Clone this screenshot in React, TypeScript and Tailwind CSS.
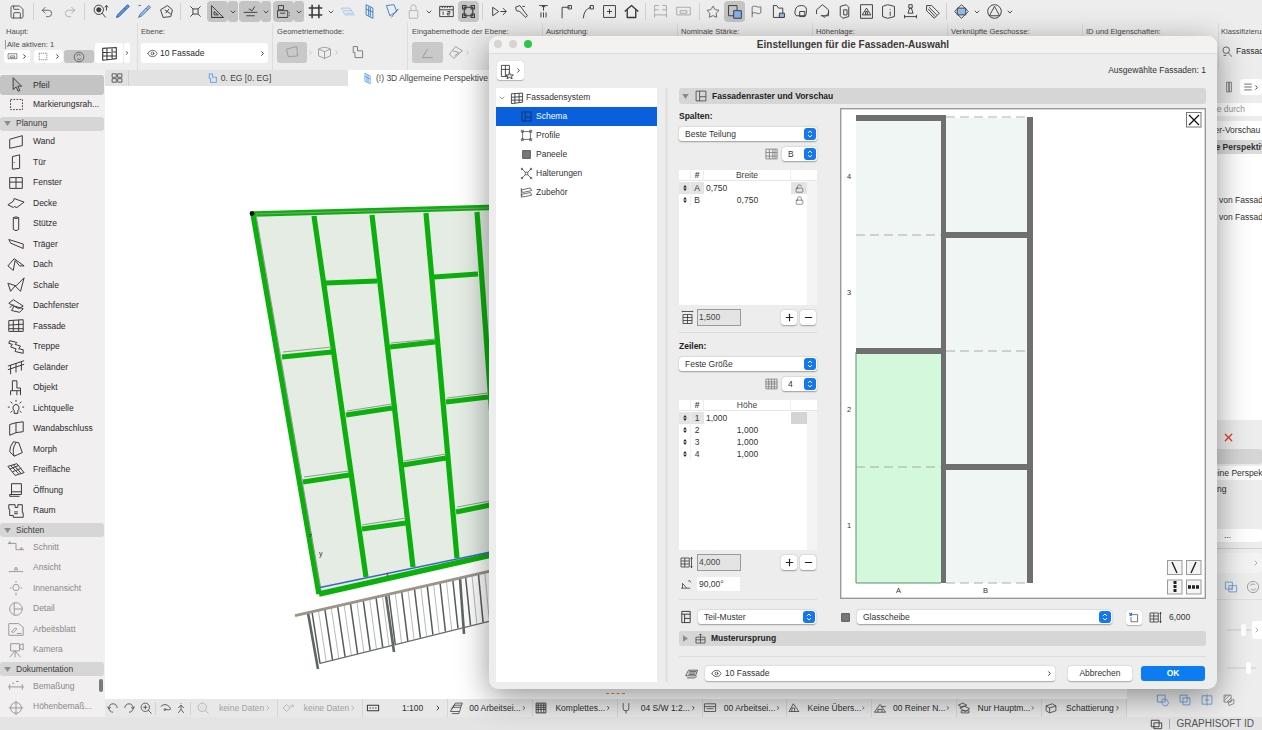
import { ChevronDown, ChevronRight, Eye, Flag, Lock, LockOpen, Menu, Minus, Plus, Redo2, Save, Star, Undo2, X } from "lucide-react";
import type { ReactNode } from "react";

// small line icon on a 20 unit box
function Ic({ children, c = "text-[#3a3a3a]", s = "w-[17px] h-[17px]" }: { children: ReactNode; c?: string; s?: string }) {
  return (
    <svg viewBox="0 0 20 20" fill="none" stroke="currentColor" strokeWidth="1.1" strokeLinejoin="round" className={`${c} ${s} shrink-0`}>
      {children}
    </svg>
  );
}

const P = ({ d, f, w }: { d: string; f?: string; w?: number }) => <path d={d} fill={f ?? "none"} strokeWidth={w} />;

const icons: Record<string, ReactNode> = {
  arrow: <P d="M6 2V16L9.5 13 12 18 14 17 11.5 12H16Z" f="#b8b8b8" />,
  marquee: <path d="M3 4H17V16H3Z" strokeDasharray="2 1.5" />,
  wand: <P d="M3 7 17 3V14L3 17Z" />,
  tuer: <><P d="M6 4 14 2V17L6 18Z" /><P d="M8 10V11" /></>,
  fenster: <P d="M3 4H17V16H3ZM10 4V16M3 9H17" />,
  decke: <P d="M1 12 7 8 8 5 19 9 11 15 8 14 7 15Z" />,
  stuetze: <P d="M7 3Q10 1 13 3V16Q10 19 7 16ZM7 3Q10 5 13 3" />,
  traeger: <P d="M2 5 18 10V15L4 9Z" />,
  dach: <P d="M1 11 8 3 19 11 14 11 9 5 7 16Z" />,
  schale: <P d="M1 8 10 11 19 2 15 17 9 11 4 17Z" />,
  dachfenster: <P d="M2 7 7 3 18 10 13 13ZM3 12 7 8M5 15 14 17 18 13 8 10Z" />,
  fassade: <P d="M2 4 18 3V16H2ZM7 4V16M13 3V16M2 9 18 8M2 13H18" />,
  treppe: <P d="M3 3 11 5 9 7 15 9 13 12 18 13 18 17 9 15 10 12 4 10 6 7 2 6Z" />,
  gelaender: <P d="M1 9 19 3M1 13 19 7M4 8V18M10 6V16M16 4V14" />,
  objekt: <P d="M6 2H11V10H15V18M15 13H4V18M6 2V13M11 13V18" />,
  licht: <P d="M10 6A4 4 0 0 1 12 13V16H8V13A4 4 0 0 1 10 6ZM10 1V3M3 9H1M19 9H17M4 3 6 5M16 3 14 5M4 15 6 13M16 15 14 13" />,
  abschluss: <P d="M3 5 10 3 18 2V13L10 14 3 17ZM10 3V14" />,
  morph: <P d="M7 2 13 3 17 14 8 18 3 13Q3 7 7 2ZM8 18Q5 10 10 3" />,
  freiflaeche: <P d="M1 6 11 3 19 13 9 16ZM4 5 13 14M7 4 16 14M3 9 13 5M6 12 16 8" />,
  oeffnung: <P d="M5 3H16V15H3V17H14M5 3V15M5 12H16" />,
  raum: <P d="M2 3H9V6H12V3H17V12H18V17H7V15H3V8H2ZM8 11H12M8 13H12" />,
  schnitt: <P d="M1 6H10V13H19M4 6 2 6 3 4ZM16 13 15 11 17 11Z" f="none" />,
  ansicht: <P d="M2 14H18M8 12 10 9 12 12Z" />,
  innen: <P d="M10 6A3 3 0 1 0 10 13 3 3 0 1 0 10 6ZM10 2V4M10 15V18M3 10H5M15 10H17" />,
  detail: <P d="M10 3A7 7 0 1 0 10 17 7 7 0 1 0 10 3ZM8 3V17M8 10H17" />,
  blatt: <P d="M2 4H13L18 8V17H2ZM5 13 9 9 11 10 7 14ZM11 15H16" />,
  kamera: <P d="M4 3H14V11H4ZM14 5 18 3V10L14 8ZM9 11 3 18M9 11 15 18M9 11V18" />,
  bemass: <P d="M1 11H19M3 8V14M17 8V14M6 7H8M10 5H13" />,
  hoehe: <P d="M10 5A6 6 0 1 0 10 17 6 6 0 1 0 10 5ZM10 3V19M2 11H18" />,
  mag: <><circle cx="8" cy="8" r="5.5" /><circle cx="8" cy="8" r="2.5" fill="currentColor" /><P d="M12 12 16 17M17 3V9M15 5 17 3 19 5" /></>,
  pipette: <P d="M16 2 18 4 14 8 12 6ZM12 6 4 14 3 17 6 16 14 8" f="#5b9be6" />,
  pipette2: <P d="M15 3 17 5 14 8 12 6ZM12 6 5 13 3 17 7 15 14 8M3 3H6" f="#9fc4ee" />,
  pick: <P d="M3 8 11 3 17 8 15 16 6 17ZM8 8 15 13M9 12 13 7" />,
  snap: <P d="M4 4 7 7M16 4 13 7M4 16 7 13M16 16 13 13M7 7H13V13H7Z" />,
  triangle: <P d="M3 3V17H17ZM6 10V14H11ZM3 17H17" />,
  lines: <P d="M2 11H18M5 15H15M8 7 12 9 15 4" />,
  coords: <P d="M4 3V8H10V3ZM3 9H15V17H3ZM6 12H12M17 11V12M17 14V15" />,
  gridx: <P d="M6 2V18M14 2V18M2 6H18M2 14H18" w={1.8} />,
  plane: <P d="M3 6H13L18 14H7ZM6 9H15M8 12H16" />,
  slab: <P d="M6 2 14 6V18L6 14ZM6 7 14 11M9 4V15M11 5V16" />,
  paint: <P d="M4 3 13 2 16 10 8 15ZM15 10 18 7 12 14 10 17" />,
  padlock: <P d="M7 9V5A3 3 0 0 1 13 5V9M5 9H15V18H5Z" />,
  ruler: <P d="M2 4H18V16H2ZM2 8H18M5 4V6M8 4V6M11 4V6M14 4V6M6 10V14M11 10H14V12H11V14H14" />,
  frame: <P d="M5 5H15V15H5ZM3 3H7V7H3ZM13 3H17V7H13ZM3 13H7V17H3ZM13 13H17V17H13Z" w={1.3} />,
  vtool: <P d="M2 5 9 10 2 15ZM11 10H18M14 6 18 10 14 14" />,
  wrench: <P d="M3 5 8 3 11 7 17 15 15 17 8 10 4 9ZM11 4H14" />,
  updn: <P d="M10 3V9M8 5 10 3 12 5M5 3H15M7 11V17M10 11V17M13 11V17" />,
  corner: <P d="M6 18V5H15M13 3H17V7H13Z" />,
  curve: <P d="M5 18Q6 7 14 5M13 3H17V7H13Z" />,
  boxarrow: <P d="M3 3H17V17H3ZM10 7V13M7 10H13" />,
  house: <P d="M2 10 10 3 18 10M5 8V17H15V8" w={1.6} />,
  dim: <P d="M3 3H8M3 8H8M12 3H17M12 8H17M3 3V11M17 3V11M3 14H17M3 12V17M17 12V17" />,
  dim2: <P d="M2 5H18V14H2ZM6 9H14V12H6Z" />,
  dup: <><P d="M3 3H13V15H3Z" /><P d="M9 9H18V18H9Z" f="#7fb0ee" /></>,
  doc: <><P d="M4 3H8L10 6H15V17H4Z" /><P d="M11 12H17V17H11Z" f="#8fbdf0" /></>,
  cloud: <><P d="M4 8Q5 3 11 3T17 8 16 15H5Q2 12 4 8Z" /><P d="M9 10H15V16H9Z" /></>,
  housecheck: <P d="M3 8 10 2 17 8V15H8M3 8V13M9 14 12 17 18 11" />,
  stackg: <P d="M5 4 12 2 15 5V16L8 18 5 15ZM9 8H13V14H9Z" />,
  picture: <P d="M3 2H17V18H3ZM5 14 10 6 15 14ZM9 14V10H11V14" />,
  infob: <P d="M3 4 9 2 17 4V16L9 18 3 16ZM12 7V8M12 10V15" />,
  brush: <P d="M8 2H12V6H8ZM9 6 7 12H13L11 6ZM3 16H17M3 14V18M17 14V18" />,
  tag: <P d="M3 3H9L18 12 12 18 3 9ZM6 5 15 14M5 7 13 16" />,
  diamondb: <><P d="M10 2 18 10 10 18 2 10Z" /><P d="M5 6H15V14H5Z" f="#8fbdf0" /></>,
  tri: <P d="M10 2A8 8 0 1 0 10 18 8 8 0 1 0 10 2ZM10 4 16 15H4Z" />,
  facadeGrid: <P d="M2 4 18 3V16L2 18ZM7 4V18M13 3V17M2 9 18 8M2 13H18" w={1.3} />,
  poly: <P d="M3 6 15 3 16 14 5 15Z" />,
  solid: <P d="M3 6Q10 2 17 6V14L10 17 3 14ZM3 6 10 9 17 6M10 9V17" />,
  polyopen: <P d="M5 3H10V8H16V16H7V10H5Z" />,
  angle: <P d="M4 16H16M4 16 10 6M7 11V12" />,
  meshfan: <P d="M3 12 10 3 18 8 8 17ZM7 8 14 10 9 14" />,
  schema: <P d="M3 3H17V17H3ZM8 3V17M8 11H17" />,
  profile: <P d="M4 4H16V16H4ZM2 2H5V5H2ZM15 2H18V5H15ZM2 15H5V18H2ZM15 15H18V18H15Z" />,
  paneele: <P d="M4 4H16V16H4Z" f="#777" />,
  halter: <P d="M8 8H12V12H8ZM3 3 8 8M17 3 12 8M3 17 8 12M17 17 12 12M2 2H4V4H2ZM16 2H18V4H16ZM2 16H4V18H2ZM16 16H18V18H16Z" />,
  zubehoer: <P d="M2 6 16 3 18 7 4 10ZM2 13 16 10 18 14 4 17ZM2 3V18" />,
  rows: <P d="M2 3H18V17H2ZM2 7H18M2 10H18M2 14H18M6 3V17M10 3V17M14 3V17" />,
  cols: <P d="M2 3H18V17H2ZM7 3V17M12 3V17M15 3V17M2 8H18M2 13H18" />,
  width: <P d="M4 6H16V18H4ZM4 10H16M4 14H16M10 6V18M3 2H17M3 1V3M17 1V3" />,
  height: <P d="M2 4H13V16H2ZM2 8H13M2 12H13M7 4V16M16 3V17M15 5 16 3 17 5M15 15 16 17 17 15" />,
  alpha: <P d="M3 16H16M5 16V9L11 16M13 6Q15 3 17 8" />,
  teil: <P d="M4 2H16V18H4ZM4 6H16M8 6V18M8 12H16" w={1.4} />,
  glas: <P d="M4 4H16V16H4Z" f="#777" />,
  load: <><path d="M7 6H16V18H5V10" stroke="#333" /><path d="M2 3 6 7M6 3V7H2" strokeWidth="1.8" /></>,
  layersm: <P d="M1 14 5 6H18L15 14ZM3 17H14L17 14M6 8H16M5 10H15M5 12H14" />,
  origin: <P d="M3 8H17V17H3ZM3 12H17M10 3V17M8 5 10 3 12 5" />,
  chosen: <><P d="M3 3H13V17H3ZM3 8H13M8 3V17" /><path d="M13 12 14.5 15 18 15 15.5 17 16.5 20 13 18 10 20 11 17 8.5 15 12 15Z" fill="#eee" /></>,
  view: <P d="M3 4H9V9H3ZM11 4H17V9H11ZM3 11H9V16H3ZM11 11H17V16H11Z" />,
  undoV: <P d="M16 10A6 6 0 1 0 10 16M2 8 4 11 7 9" />,
  redoV: <P d="M4 10A6 6 0 1 1 10 16M18 8 16 11 13 9" />,
  zoom: <P d="M9 3A6 6 0 1 0 9 15 6 6 0 1 0 9 3ZM9 6V12M6 9H12M13 13 18 18" />,
  orbit: <P d="M4 8Q10 2 16 8T10 12M8 12 10 14 10 10" />,
  walk: <P d="M10 3V4M10 6 6 10M10 6 14 10M10 6V12L6 17M10 12 14 17" />,
  wheel: <P d="M9 3A6 6 0 1 0 9 15 6 6 0 1 0 9 3ZM9 6V7M6 9H7M11 9H12M9 11V12M13 13 18 18" />,
  rot: <P d="M3 10 8 5 13 10 8 15ZM13 7H18M16 5 18 7 16 9" />,
  scale: <P d="M2 6H18V14H2ZM5 10H7M9 10H11M13 10H15" w={1.5} />,
  stack: <P d="M2 15 5 9H17L15 15ZM4 12 7 6H18L16.5 9M6 9 9 3H19L18 6M4 18H14L15 15" />,
  hatch: <P d="M3 3H17V17H3ZM3 6H17M3 9H17M3 12H17M6 3V17M10 3V17M14 3V17" w={1.3} />,
  pen: <P d="M6 3V11Q6 14 10 14T14 11V3M10 14V18" />,
  penset: <P d="M2 4H18V15H2ZM2 8H18M5 11H15" />,
  over: <P d="M3 15 9 4 17 15ZM7 15V10H11V15" />,
  house2: <P d="M2 16 10 5 18 16ZM7 16V12H13V16M12 8H18" />,
  mesh: <P d="M2 6 8 3 14 6 8 9ZM4 10 10 7 18 11 12 15ZM6 14H17V17H6Z" />,
  cube: <P d="M3 7 12 4 17 7V14L8 17 3 14ZM3 7 8 10 17 7M8 10V17" />,
  window: <P d="M2 5H14V15H2ZM6 9H18V18H6Z" w={1.4} />,
  hand: <><P d="M2 3H13V13H2Z" /><P d="M9 9 15 9 18 14 16 18H11L8 14Z" /></>,
  overlay: <><P d="M3 3H13V13H3Z" /><P d="M7 7H17V17H7Z" /></>,
  split: <><P d="M3 4H17V16H3Z" /><P d="M10 2V18M7 10H13" /></>,
  hatchmark: <P d="M3 3H13V13H3ZM3 7 7 3M3 11 11 3M7 13 13 7M9 13 17 9 17 15 10 18Z" />,
  clip: <P d="M6 2H14V18H6ZM9 2V18M11 2V18" />,
  sync: <P d="M10 2A8 8 0 1 0 10 18 8 8 0 1 0 10 2ZM6 8Q8 4 13 7M14 12Q12 16 7 13" />,
  dupb: <><P d="M2 3H12V13H2Z" /><P d="M7 8H18V17H7ZM10 12 12 10M10 12 12 14" /></>,
  search: <P d="M8 3A5 5 0 1 0 8 13 5 5 0 1 0 8 3ZM11 12 17 18M4 16H8" />,
};

const Slot = ({ i, c }: { i: string; c?: string }) => (
  <div className="w-[22px] h-[22px] flex items-center justify-center shrink-0">
    <Ic c={c}>{icons[i]}</Ic>
  </div>
);
const GrayBox = ({ i, w = "w-[21px]" }: { i: string; w?: string }) => (
  <div className={`${w} h-[21px] rounded-[4px] bg-[#c4c4c4] flex items-center justify-center shrink-0`}>
    <Ic>{icons[i]}</Ic>
  </div>
);
const Chev = ({ box }: { box?: boolean }) => (
  <div className={`w-[10px] h-[21px] flex items-center justify-center shrink-0 rounded-[3px] ${box ? "bg-[#c4c4c4]" : ""}`}>
    <ChevronDown size={8} strokeWidth={2.5} className="text-[#333]" />
  </div>
);
const Bar = ({ cls }: { cls: string }) => <div className={`w-px h-[17px] bg-[#d2d2d2] shrink-0 ${cls}`} />;

function Toolbar() {
  return (
    <div className="h-[23px] flex items-center pl-[6px] bg-[#ededed] shrink-0">
      <div className="w-[22px] flex justify-center"><Save size={16} strokeWidth={1.2} className="text-[#333]" /></div>
      <Bar cls="ml-[5px] mr-[2px]" />
      <div className="w-[22px] flex justify-center"><Undo2 size={14} strokeWidth={1.2} className="text-[#333]" /></div>
      <div className="w-[22px] flex justify-center ml-px"><Redo2 size={14} strokeWidth={1.2} className="text-[#999]" /></div>
      <Bar cls="ml-[3px] mr-[4px]" />
      <Slot i="mag" />
      <Slot i="pipette" c="text-[#245a9c]" />
      <Slot i="pipette2" c="text-[#3f6fa8]" />
      <Slot i="pick" />
      <Bar cls="ml-[3px] mr-[3px]" />
      <Slot i="snap" />
      <div className="w-px" />
      <GrayBox i="triangle" /><Chev box />
      <div className="w-px" />
      <GrayBox i="lines" w="w-[22px]" /><Chev box />
      <div className="w-[2px]" />
      <GrayBox i="coords" /><Chev box />
      <Slot i="gridx" /><Chev />
      <Slot i="plane" c="text-[#a9c6e6]" />
      <Slot i="slab" c="text-[#3878c8]" />
      <Slot i="paint" c="text-[#3f7ccc]" />
      <Slot i="padlock" c="text-[#b5b5b5]" /><Chev />
      <div className="w-px" />
      <Slot i="ruler" />
      <div className="w-px" />
      <GrayBox i="frame" />
      <Bar cls="ml-[3px] mr-[5px]" />
      <Slot i="vtool" /><Slot i="wrench" /><Slot i="updn" /><Slot i="corner" /><Slot i="curve" /><Slot i="boxarrow" /><Slot i="house" />
      <Bar cls="ml-[3px] mr-[3px]" />
      <Slot i="dim" c="text-[#a8a8a8]" />
      <div className="w-px" />
      <Slot i="dim2" c="text-[#a8a8a8]" />
      <Bar cls="ml-[5px] mr-[2px]" />
      <div className="w-[22px] flex justify-center"><Star size={14} strokeWidth={1.2} className="text-[#333]" /></div>
      <GrayBox i="dup" />
      <div className="w-[22px] flex justify-center"><Flag size={13} strokeWidth={1.2} className="text-[#333]" /></div>
      <Slot i="doc" /><Slot i="cloud" /><Slot i="housecheck" /><Slot i="stackg" /><Slot i="picture" /><Slot i="infob" /><Slot i="brush" /><Slot i="tag" />
      <Bar cls="ml-[3px] mr-[3px]" />
      <Slot i="diamondb" /><Chev />
      <div className="w-px" />
      <Slot i="tri" /><Chev />
    </div>
  );
}

const Label = ({ t, w }: { t: string; w: string }) => (
  <div className={`${w} shrink-0 h-full border-r border-[#dcdcdc] pl-[3px] pt-[4px] text-[7.6px] leading-[9px] text-[#4a4a4a] whitespace-nowrap overflow-hidden`}>{t}</div>
);

function InfoBox() {
  return (
    <div className="h-[47px] flex bg-[#ededed] shrink-0 shadow-[0_1px_0_#e2e2e2]">
      <div className="w-[138px] shrink-0 border-r border-[#dcdcdc] pl-[6px] pt-[4px] text-[7.6px] leading-[9px] text-[#4a4a4a]">
        Haupt:
        <div className="mt-[4px] border-l border-[#999] -ml-px pl-px">Alle aktiven: 1</div>
        <div className="flex items-center mt-px -ml-[2px]">
          <div className="w-[26px] h-[13px] rounded-[3px] bg-white flex items-center justify-between px-[2px]">
            <Ic s="w-[13px] h-[11px]">{icons.dim2}</Ic><ChevronRight size={7} strokeWidth={3} className="text-[#222]" />
          </div>
          <div className="w-[29px] h-[13px] rounded-[3px] bg-white flex items-center justify-between px-[2px] ml-[4px]">
            <Ic s="w-[14px] h-[11px]">{icons.marquee}</Ic><ChevronRight size={7} strokeWidth={3} className="text-[#222]" />
          </div>
          <div className="w-[30px] h-[13px] rounded-[3px] bg-[#c4c4c4] flex items-center justify-center ml-px">
            <Ic s="w-[12px] h-[12px]">{icons.sync}</Ic>
          </div>
          <div className="w-[28px] h-[20px] rounded-[3px] bg-white flex items-center justify-center ml-px -mt-[7px]">
            <Ic s="w-[19px] h-[17px]">{icons.facadeGrid}</Ic>
          </div>
          <div className="w-[6px] h-[20px] rounded-[2px] bg-white flex items-center justify-center -mt-[7px] ml-px">
            <ChevronRight size={6} strokeWidth={3} className="text-[#222]" />
          </div>
        </div>
      </div>
      <div className="w-[135px] shrink-0 border-r border-[#dcdcdc] pl-[3px] pt-[4px] text-[7.6px] leading-[9px] text-[#4a4a4a]">
        Ebene:
        <div className="w-[127px] h-[20px] mt-[7px] rounded-[3px] bg-white flex items-center pl-[6px] pr-[2px] text-[8.5px] text-[#2b2b2b]">
          <Eye size={11} strokeWidth={1.4} className="text-[#222] shrink-0" />
          <span className="ml-[2px] flex-1">10 Fassade</span>
          <ChevronRight size={7} strokeWidth={3} className="text-[#222]" />
        </div>
      </div>
      <div className="w-[135px] shrink-0 border-r border-[#dcdcdc] pl-[4px] pt-[4px] text-[7.6px] leading-[9px] text-[#4a4a4a]">
        Geometriemethode:
        <div className="flex items-center mt-[6px]">
          <div className="w-[30px] h-[21px] rounded-[3px] bg-[#c9c9c9] flex items-center justify-center"><Ic c="text-[#9a9a9a]">{icons.poly}</Ic></div>
          <ChevronRight size={7} className="text-[#aaa]" />
          <div className="ml-[2px]"><Ic c="text-[#9a9a9a]">{icons.solid}</Ic></div>
          <ChevronRight size={7} className="text-[#aaa]" />
          <div className="ml-[9px]"><Ic c="text-[#777]">{icons.polyopen}</Ic></div>
        </div>
      </div>
      <div className="w-[135px] shrink-0 border-r border-[#dcdcdc] pl-[4px] pt-[4px] text-[7.6px] leading-[9px] text-[#4a4a4a] whitespace-nowrap overflow-hidden">
        Eingabemethode der Ebene:
        <div className="flex items-center mt-[6px]">
          <div className="w-[31px] h-[21px] rounded-[3px] bg-[#c9c9c9] flex items-center justify-center"><Ic c="text-[#9a9a9a]">{icons.angle}</Ic></div>
          <div className="ml-[4px]"><Ic c="text-[#9a9a9a]">{icons.meshfan}</Ic></div>
          <ChevronRight size={7} className="text-[#aaa]" />
        </div>
      </div>
      <Label t="Ausrichtung:" w="w-[135px]" />
      <Label t="Nominale Stärke:" w="w-[135px]" />
      <Label t="Höhenlage:" w="w-[135px]" />
      <Label t="Verknüpfte Geschosse:" w="w-[135px]" />
      <Label t="ID und Eigenschaften:" w="w-[136px]" />
      <div className="flex-1 min-w-0 pl-[2px] pt-[4px] text-[7.6px] leading-[9px] text-[#4a4a4a] whitespace-nowrap overflow-hidden">
        Klassifizierung
        <div className="flex items-center mt-[9px] text-[8.5px] text-[#2b2b2b]">
          <Ic s="w-[13px] h-[13px]">{icons.search}</Ic><span className="ml-[2px]">Fassade</span>
        </div>
      </div>
    </div>
  );
}

const SideItem = ({ i, t, off }: { i: string; t: string; off?: boolean }) => (
  <div className={`h-[20.5px] flex items-center shrink-0 whitespace-nowrap ${off ? "text-[#8a8a8a]" : "text-[#2b2b2b]"}`}>
    <div className="w-[33px] flex justify-center pr-px">
      <Ic s="w-[20px] h-[18px]" c={off ? "text-[#9a9a9a]" : "text-[#3a3a3a]"}>{icons[i]}</Ic>
    </div>
    {t}
  </div>
);
const SideHead = ({ t }: { t: string }) => (
  <div className="h-[14px] mt-[2px] mr-[1px] rounded-[3px] bg-[#d6d6d6] flex items-center pl-[4px] shrink-0 text-[#3c3c3c]">
    <svg viewBox="0 0 8 6" className="w-[7px] h-[5px] text-[#8c8c8c]"><path d="M0 0H8L4 6Z" fill="currentColor" /></svg>
    <span className="ml-[5px]">{t}</span>
  </div>
);

function Sidebar() {
  return (
    <div className="w-[105px] shrink-0 h-full bg-[#f1eff0] pt-[5px] flex flex-col text-[8.5px] relative overflow-hidden">
      <div className="h-[20px] mr-[1px] rounded-[3px] bg-[#c4c4c4] flex items-center text-[#2b2b2b]">
        <div className="w-[33px] flex justify-center"><Ic>{icons.arrow}</Ic></div>Pfeil
      </div>
      <div className="h-[20px] flex items-center text-[#2b2b2b] whitespace-nowrap">
        <div className="w-[33px] flex justify-center"><Ic>{icons.marquee}</Ic></div>Markierungsrah...
      </div>
      <SideHead t="Planung" />
      <div className="h-px shrink-0" />
      <SideItem i="wand" t="Wand" />
      <SideItem i="tuer" t="Tür" />
      <SideItem i="fenster" t="Fenster" />
      <SideItem i="decke" t="Decke" />
      <SideItem i="stuetze" t="Stütze" />
      <SideItem i="traeger" t="Träger" />
      <SideItem i="dach" t="Dach" />
      <SideItem i="schale" t="Schale" />
      <SideItem i="dachfenster" t="Dachfenster" />
      <SideItem i="fassade" t="Fassade" />
      <SideItem i="treppe" t="Treppe" />
      <SideItem i="gelaender" t="Geländer" />
      <SideItem i="objekt" t="Objekt" />
      <SideItem i="licht" t="Lichtquelle" />
      <SideItem i="abschluss" t="Wandabschluss" />
      <SideItem i="morph" t="Morph" />
      <SideItem i="freiflaeche" t="Freifläche" />
      <SideItem i="oeffnung" t="Öffnung" />
      <SideItem i="raum" t="Raum" />
      <SideHead t="Sichten" />
      <SideItem i="schnitt" t="Schnitt" off />
      <SideItem i="ansicht" t="Ansicht" off />
      <SideItem i="innen" t="Innenansicht" off />
      <SideItem i="detail" t="Detail" off />
      <SideItem i="blatt" t="Arbeitsblatt" off />
      <SideItem i="kamera" t="Kamera" off />
      <SideHead t="Dokumentation" />
      <SideItem i="bemass" t="Bemaßung" off />
      <SideItem i="hoehe" t="Höhenbemaß..." off />
      <div className="absolute left-[99px] top-[609px] w-[4px] h-[13px] rounded-full bg-[#7a7a7a]" />
    </div>
  );
}

const railTop = (x: number) => 615.7 - (x - 295) * 0.228;
const railBot = (x: number) => 663.3 - (x - 320) * 0.2476;

function FacadeDrawing() {
  const greens = [
    [314, 216, 366, 577], [372, 215, 413, 567], [426, 213, 457, 558], [477, 212, 502, 553],
    [282, 357, 332, 352], [303, 482, 349, 475], [326, 283, 377, 281], [346, 415, 392, 408],
    [362, 529, 406, 523], [390, 347, 435, 342], [403, 465, 446, 458], [434, 277, 478, 274],
    [446, 402, 488, 397], [456, 512, 490, 505],
  ];
  const rods = [];
  for (let x = 312; x < 492; x += 6.4) rods.push(x);
  return (
    <svg viewBox="105 86 400 600" className="absolute left-0 top-0 w-[400px] h-[600px]">
      <path d="M253 214 505 207V550L319 594Z" fill="#e4ece4" />
      {greens.map((g, i) => (
        <line key={i} x1={g[0]} y1={g[1]} x2={g[2]} y2={g[3]} stroke="#0cb00c" strokeWidth="5.2" />
      ))}
      <path d="M283 352 332 347M304 477 349 471M347 411 392 404M362 525 406 518M391 343 435 339M404 461 446 454M447 398 488 393M457 507 490 501" stroke="#8f9d8f" strokeWidth="1.2" />
      <path d="M253 214 505 207M253 214 319 594M319 594 505 552" stroke="#0cb00c" strokeWidth="5.4" fill="none" />
      <path d="M256 214 505 207.5M256 215 321 590" stroke="#8a9c8a" strokeWidth="1.1" fill="none" />
      <path d="M320 587.5 505 549" stroke="#3f63c8" strokeWidth="1.6" />
      <circle cx="252" cy="213.5" r="2.4" fill="#111" />
      <text x="309" y="537" fontSize="6" fill="#333" fontFamily="Liberation Sans">z</text>
      <text x="319" y="556" fontSize="7" fill="#333" fontFamily="Liberation Sans">y</text>
      <text x="386" y="576" fontSize="6" fill="#333" fontFamily="Liberation Sans">x</text>
      {rods.map((x, i) => (
        <line key={x} x1={x} y1={railTop(x)} x2={x + 8 - (x - 312) * 0.02} y2={railBot(x + 8)} stroke={i % 2 ? "#a3a8a8" : "#565c5c"} strokeWidth={i % 2 ? 0.8 : 1.5} />
      ))}
      <path d="M308 613 318 669M386 596 394 652M460 578 464 634" stroke="#5f6666" strokeWidth="2.6" />
      <line x1="295" y1="615.7" x2="490" y2="571.2" stroke="#9d9488" strokeWidth="2.8" />
      <line x1="320" y1="663.3" x2="490" y2="621.2" stroke="#6a7070" strokeWidth="1.3" />
    </svg>
  );
}

const StatusItem = ({ i, t, off, center }: { i: string; t: string; off?: boolean; center?: boolean }) => (
  <div className={`w-[84.9px] shrink-0 flex items-center h-full border-r border-[#d6d6d6] whitespace-nowrap ${off ? "text-[#a2a2a2]" : "text-[#2e2e2e]"}`}>
    <div className="w-[20px] flex justify-center"><Ic s="w-[14px] h-[14px]" c={off ? "text-[#aaa]" : "text-[#3a3a3a]"}>{icons[i]}</Ic></div>
    <span className={`ml-[6px] flex-1 ${center ? "pl-[13px]" : ""}`}>{t}</span>
    <ChevronRight size={8} strokeWidth={2.6} className={`mr-[5px] ${off ? "text-[#aaa]" : "text-[#222]"}`} />
  </div>
);
const StatusIcon = ({ i }: { i: string }) => (
  <div className="w-[17px] flex justify-center"><Ic s="w-[14px] h-[14px]">{icons[i]}</Ic></div>
);

function StatusBar() {
  return (
    <div className="h-[18px] shrink-0 bg-[#e8e8e8] flex items-center text-[8.5px] overflow-hidden">
      <StatusIcon i="undoV" /><StatusIcon i="redoV" /><StatusIcon i="zoom" />
      <div className="w-px h-[13px] bg-[#d2d2d2] mx-[1px]" />
      <StatusIcon i="orbit" /><StatusIcon i="walk" />
      <div className="w-px h-[13px] bg-[#d2d2d2] ml-[1px] mr-[2px]" />
      <StatusItem i="wheel" t="keine Daten" off />
      <StatusItem i="rot" t="keine Daten" off />
      <StatusItem i="scale" t="1:100" center />
      <StatusItem i="stack" t="00 Arbeitsei..." />
      <StatusItem i="hatch" t="Komplettes..." />
      <StatusItem i="pen" t="04 S/W 1:2..." />
      <StatusItem i="penset" t="00 Arbeitsei..." />
      <StatusItem i="over" t="Keine Übers..." />
      <StatusItem i="house2" t="00 Reiner N..." />
      <StatusItem i="mesh" t="Nur Hauptm..." />
      <StatusItem i="cube" t="Schattierung" />
    </div>
  );
}

function Center() {
  return (
    <div className="flex-1 min-w-0 h-full flex flex-col">
      <div className="h-[16px] shrink-0 bg-[#e2e2e2] flex text-[8.5px] text-[#444]">
        <div className="w-[24px] flex items-center justify-center border-r border-[#cfcfcf]"><Ic s="w-[14px] h-[14px]">{icons.view}</Ic></div>
        <div className="w-[219px] flex items-center justify-center">
          <Ic s="w-[13px] h-[13px]" c="text-[#3b8fe8]">{icons.polyopen}</Ic>
          <span className="ml-[2px]">0. EG [0. EG]</span>
        </div>
        <div className="flex-1 bg-white flex items-center pl-[13px]">
          <Ic s="w-[13px] h-[13px]" c="text-[#3b8fe8]">{icons.slab}</Ic>
          <span className="ml-[2px]">(!) 3D Allgemeine Perspektive</span>
        </div>
      </div>
      <div className="flex-1 bg-white relative overflow-hidden">
        <FacadeDrawing />
        <div className="absolute left-[501px] bottom-[5px] w-[19px] border-t border-dashed border-[#e08a2c]" />
      </div>
      <StatusBar />
    </div>
  );
}

function RightPanel() {
  return (
    <div className="w-[135px] shrink-0 h-full bg-[#ededed] flex flex-col text-[8.5px] text-[#333] overflow-hidden whitespace-nowrap">
      <div className="h-[16px] mt-[9px] shrink-0 flex justify-end">
        <div className="mr-[5px] mt-[1px]"><Ic s="w-[12px] h-[14px]" c="text-[#555]">{icons.clip}</Ic></div>
        <div className="w-[22px] h-[16px] rounded-[3px] bg-white flex items-center justify-center">
          <Menu size={10} className="text-[#555]" /><ChevronRight size={7} strokeWidth={3} />
        </div>
      </div>
      <div className="h-[13px] mt-[8px] shrink-0 bg-white text-[#999] pl-[51px] flex items-center">Suchen Sie durch</div>
      <div className="h-[299px] mt-[5px] shrink-0 bg-white pt-[2px]">
        <div className="h-[14px] flex items-center pl-[36px]">Fassadenraster-Vorschau</div>
        <div className="h-[14px] mt-[3px] bg-[#dcdcdc] font-bold flex items-center pl-[35px]">3D Allgemeine Perspektive</div>
        <div className="h-[14px] mt-[39px] flex items-center pl-[92px]">von Fassade</div>
        <div className="h-[14px] mt-[3px] flex items-center pl-[92px]">von Fassade</div>
      </div>
      <div className="h-[18px] mt-[8px] shrink-0 flex items-center justify-end pr-[27px]"><X size={13} strokeWidth={2.2} className="text-[#ea3323]" /></div>
      <div className="h-[15px] mt-[3px] shrink-0 bg-[#d6d6d6] rounded-[3px]" />
      <div className="h-[14px] mt-[2px] shrink-0 bg-white flex items-center pl-[60px]">Allgemeine Perspektive</div>
      <div className="h-[14px] mt-[2px] shrink-0 flex items-center pl-[57px]">Abdeckung</div>
      <div className="h-[13px] mt-[33px] shrink-0 bg-white rounded-[3px] flex items-center justify-end pr-[31px]">...</div>
      <div className="h-px mt-[6px] shrink-0 bg-[#d2d2d2]" />
      <div className="h-[20px] mt-[4px] shrink-0 bg-[#f3f3f3] rounded-[3px] flex items-center justify-end pr-[2px]"><ChevronRight size={8} className="text-[#888]" /></div>
      <div className="h-[22px] mt-[3px] shrink-0 flex items-center justify-end gap-[8px] pr-[2px]">
        <Ic s="w-[14px] h-[14px]" c="text-[#5b93d8]">{icons.dupb}</Ic>
        <Ic s="w-[14px] h-[14px]" c="text-[#888]">{icons.sync}</Ic>
      </div>
      <div className="h-px mt-[1px] shrink-0 bg-[#dedede]" />
      <div className="h-[18px] mt-[21px] shrink-0 flex items-center">
        <div className="flex-1 h-[2px] bg-[#dddddd] ml-[100px]" />
        <div className="w-[5px] h-[12px] rounded-[2px] bg-white -ml-[10px] mr-[6px]" />
        <div className="w-[10px] h-[18px] rounded-l-[3px] bg-white flex items-center justify-center"><ChevronRight size={8} className="text-[#888]" /></div>
      </div>
      <div className="h-[12px] mt-[23px] shrink-0 flex items-center">
        <div className="flex-1 h-[2px] bg-[#dddddd] ml-[100px]" />
        <div className="w-[5px] h-[12px] rounded-[2px] bg-white -ml-[10px] mr-[11px]" />
      </div>
      <div className="h-[16px] mt-[18px] shrink-0 flex items-center justify-end gap-[8px] pr-[26px]">
        <Ic s="w-[14px] h-[14px]" c="text-[#5b93d8]">{icons.hand}</Ic>
        <Ic s="w-[14px] h-[14px]" c="text-[#5b93d8]">{icons.overlay}</Ic>
        <Ic s="w-[14px] h-[14px]" c="text-[#5b93d8]">{icons.split}</Ic>
        <Ic s="w-[14px] h-[14px]" c="text-[#777]">{icons.hatchmark}</Ic>
      </div>
    </div>
  );
}

const Stepper = () => (
  <div className="w-[12px] h-[12px] rounded-[3px] bg-[#1479f0] flex flex-col items-center justify-center shrink-0">
    <svg viewBox="0 0 8 10" className="w-[6px] h-[8px]" fill="none" stroke="white" strokeWidth="1.3">
      <path d="M1.5 3.5 4 1 6.5 3.5M1.5 6.5 4 9 6.5 6.5" />
    </svg>
  </div>
);

const Sel = ({ t, w }: { t: string; w: string }) => (
  <div className={`${w} h-[14px] bg-white rounded-[3px] shadow-[0_0.5px_1.5px_rgba(0,0,0,0.35)] flex items-center pl-[6px] pr-px shrink-0`}>
    <span className="flex-1 text-[#333]">{t}</span>
    <Stepper />
  </div>
);

const SmallBtn = ({ children }: { children: ReactNode }) => (
  <div className="w-[16px] h-[15px] bg-white rounded-[3px] shadow-[0_0.5px_1.5px_rgba(0,0,0,0.35)] flex items-center justify-center">{children}</div>
);
const PlusMinus = () => (
  <div className="flex gap-[3px] ml-auto mr-[1px]">
    <SmallBtn><Plus size={11} strokeWidth={2.4} className="text-[#222]" /></SmallBtn>
    <SmallBtn><Minus size={11} strokeWidth={2.4} className="text-[#222]" /></SmallBtn>
  </div>
);

const Drag = () => (
  <svg viewBox="0 0 6 10" className="w-[4px] h-[6px] text-[#222]"><path d="M3 0 6 4H0ZM3 10 0 6H6Z" fill="currentColor" /></svg>
);

function TableRow({ k, v, sel, lock }: { k: string; v: string; sel?: boolean; lock?: "open" | "closed" }) {
  return (
    <div className={`h-[12px] flex items-center ${sel ? "bg-[#e4e4e4]" : ""}`}>
      <div className="w-[11px] flex justify-center"><Drag /></div>
      <div className="w-[13px] text-center border-l border-[#eeeeee]">{k}</div>
      <div className={`w-[87px] h-full flex items-center ml-px ${sel ? "bg-white pl-[2px] justify-start" : "justify-center"}`}>{v}</div>
      <div className={`w-[16px] h-full flex items-center justify-center ${sel && !lock ? "bg-[#d4d4d4]" : ""}`}>
        {lock === "open" && <LockOpen size={9} strokeWidth={1.4} className="text-[#333]" />}
        {lock === "closed" && <Lock size={9} strokeWidth={1.4} className="text-[#333]" />}
      </div>
    </div>
  );
}

function Table({ head, h, children }: { head: string; h: string; children: ReactNode }) {
  return (
    <div className={`${h} w-[138px] mt-[9px] bg-white flex flex-col shrink-0 text-[#333]`}>
      <div className="h-[11px] flex items-center border-b border-[#e6e6e6] shrink-0 text-[#444]">
        <div className="w-[11px]" />
        <div className="w-[13px] text-center border-l border-[#eeeeee] font-bold">#</div>
        <div className="w-[88px] text-center border-x border-[#eeeeee]">{head}</div>
        <div className="w-[16px]" />
      </div>
      <div className="flex-1 flex">
        <div className="w-[128px] pt-px">{children}</div>
        <div className="flex-1 bg-[#f4f4f4]" />
      </div>
    </div>
  );
}

function Form() {
  return (
    <div className="w-[138px] shrink-0 flex flex-col">
      <div className="h-[10px] mt-[7px] font-bold leading-[10px] text-[#222]">Spalten:</div>
      <div className="mt-[6px]"><Sel t="Beste Teilung" w="w-[138px]" /></div>
      <div className="mt-[6px] flex items-center justify-end">
        <Ic s="w-[15px] h-[14px]" c="text-[#777]">{icons.cols}</Ic>
        <div className="w-[35px] ml-[3px]"><Sel t="B" w="w-[35px]" /></div>
      </div>
      <Table head="Breite" h="h-[135px]">
        <TableRow k="A" v="0,750" sel lock="open" />
        <TableRow k="B" v="0,750" lock="closed" />
      </Table>
      <div className="mt-[4px] h-[17px] flex items-center shrink-0">
        <div className="w-[18px] flex justify-start pl-px"><Ic s="w-[15px] h-[17px]">{icons.width}</Ic></div>
        <div className="w-[44px] h-[17px] bg-[#e4e4e4] border border-[#9a9a9a] flex items-center pl-px text-[#444]">1,500</div>
        <PlusMinus />
      </div>
      <div className="h-px mt-[6px] bg-[#dcdcdc] shrink-0" />
      <div className="h-[10px] mt-[8px] font-bold leading-[10px] text-[#222]">Zeilen:</div>
      <div className="mt-[6px]"><Sel t="Feste Größe" w="w-[138px]" /></div>
      <div className="mt-[6px] flex items-center justify-end">
        <Ic s="w-[15px] h-[14px]" c="text-[#777]">{icons.rows}</Ic>
        <div className="w-[35px] ml-[3px]"><Sel t="4" w="w-[35px]" /></div>
      </div>
      <Table head="Höhe" h="h-[150px]">
        <TableRow k="1" v="1,000" sel />
        <TableRow k="2" v="1,000" />
        <TableRow k="3" v="1,000" />
        <TableRow k="4" v="1,000" />
      </Table>
      <div className="mt-[4px] h-[17px] flex items-center shrink-0">
        <div className="w-[18px]"><Ic s="w-[16px] h-[15px]">{icons.height}</Ic></div>
        <div className="w-[44px] h-[17px] bg-[#e4e4e4] border border-[#9a9a9a] flex items-center pl-px text-[#444]">4,000</div>
        <PlusMinus />
      </div>
      <div className="mt-[6px] h-[14px] flex items-center shrink-0">
        <div className="w-[18px]"><Ic s="w-[14px] h-[14px]">{icons.alpha}</Ic></div>
        <div className="w-[43px] h-[14px] bg-white flex items-center pl-[2px] text-[#333]">90,00°</div>
      </div>
      <div className="h-px mt-[8px] bg-[#dcdcdc] shrink-0" />
    </div>
  );
}

function Preview() {
  const dark = "#6f6f6f";
  return (
    <div className="w-[366px] h-[491px] mt-[4px] ml-[23px] shrink-0 bg-white">
      <svg viewBox="840 108 366 491" className="w-[366px] h-[491px]" fontFamily="Liberation Sans" fontSize="7.5" fill="#333">
        <rect x="840.7" y="108.7" width="364.6" height="489.6" fill="white" stroke="#9a9a9a" strokeWidth="1.4" />
        <rect x="856" y="118" width="85" height="234" fill="#f0f6f4" />
        <rect x="946" y="118" width="81" height="465" fill="#f0f6f4" />
        <rect x="856" y="352" width="85" height="231" fill="#d3f8dc" />
        <path d="M856 115H946V121H856ZM941 115H946V583H941ZM856 348H946V354H856ZM946 232H1027V238H946ZM946 464H1027V470H946ZM1027 117H1033V583H1027Z" fill={dark} />
        <g stroke="#9a9a9a" strokeWidth="0.8" strokeDasharray="9 5" fill="none">
          <path d="M856 235H941M946 351H1027M856 467H941M946 117H1027M946 583H1027" />
        </g>
        <path d="M856 352V583H941" stroke="#5c8f68" strokeWidth="1" fill="none" />
        <text x="847" y="179">4</text>
        <text x="847" y="295">3</text>
        <text x="847" y="412">2</text>
        <text x="847" y="528">1</text>
        <text x="896" y="593">A</text>
        <text x="983" y="593">B</text>
        <rect x="1186.5" y="112.5" width="14.5" height="14.5" fill="white" stroke="#777" />
        <path d="M1189 115 1199 125M1199 115 1189 125" stroke="#111" strokeWidth="1.3" />
        <g stroke="#9a9a9a" fill="#f4f4f4">
          <rect x="1167.5" y="560.5" width="14.5" height="14" />
          <rect x="1186.5" y="560.5" width="14.5" height="14" />
          <rect x="1167.5" y="580" width="14.5" height="14" />
          <rect x="1186.5" y="580" width="14.5" height="14" />
        </g>
        <path d="M1172 562 1177 573M1196 562 1191 573" stroke="#222" strokeWidth="1.4" />
        <path d="M1175 581V593" stroke="#222" strokeWidth="3" strokeDasharray="3 1" />
        <path d="M1188 587H1200" stroke="#222" strokeWidth="3.5" strokeDasharray="3 1" />
      </svg>
    </div>
  );
}

function Dialog() {
  return (
    <div className="absolute left-[489px] top-[36px] w-[728px] h-[653px] rounded-[9px] bg-[#ededed] shadow-[0_8px_32px_rgba(0,0,0,0.42)] flex flex-col overflow-hidden text-[8.5px] text-[#333]">
      <div className="h-[18px] shrink-0 relative bg-[#f4f2f1] border-b border-[#dcdcdc] flex items-center justify-center text-[10px] font-bold text-[#3a3a3a]">
        <div className="absolute left-[5px] top-[4px] flex gap-[7px]">
          <div className="w-[8px] h-[8px] rounded-full bg-[#d6d4d3]" />
          <div className="w-[8px] h-[8px] rounded-full bg-[#d6d4d3]" />
          <div className="w-[8px] h-[8px] rounded-full bg-[#28c840]" />
        </div>
        Einstellungen für die Fassaden-Auswahl
      </div>
      <div className="h-[34px] shrink-0 flex items-center pl-[8px] pr-[11px] pb-[1px]">
        <div className="w-[27px] h-[19px] bg-white rounded-[3px] flex items-center justify-center shadow-[0_0.5px_1px_rgba(0,0,0,0.25)]">
          <Ic s="w-[16px] h-[16px]">{icons.chosen}</Ic><ChevronRight size={7} strokeWidth={3} />
        </div>
        <span className="ml-auto text-[#333]">Ausgewählte Fassaden: 1</span>
      </div>
      <div className="flex-1 flex min-h-0">
        <div className="w-[161px] ml-[7px] h-[594px] bg-white shrink-0 text-[#333]">
          <div className="h-[19px] flex items-center">
            <ChevronDown size={8} className="ml-[2px] text-[#666]" />
            <div className="ml-[4px]"><Ic s="w-[14px] h-[14px]">{icons.facadeGrid}</Ic></div>
            <span className="ml-[2px]">Fassadensystem</span>
          </div>
          <div className="h-[19px] bg-[#0a5fdc] flex items-center pl-[24px] text-white">
            <Ic s="w-[13px] h-[13px]" c="text-[#12284d]">{icons.schema}</Ic><span className="ml-[3px]">Schema</span>
          </div>
          {[["profile", "Profile"], ["paneele", "Paneele"], ["halter", "Halterungen"], ["zubehoer", "Zubehör"]].map(([i, t]) => (
            <div key={t} className="h-[19px] flex items-center pl-[24px]">
              <Ic s="w-[13px] h-[13px]">{icons[i]}</Ic><span className="ml-[3px]">{t}</span>
            </div>
          ))}
        </div>
        <div className="w-[3px] h-[594px] ml-[8px] bg-[#e2e2e2] shrink-0" />
        <div className="w-[527px] ml-[11px] shrink-0 flex flex-col">
          <div className="h-[16px] rounded-[3px] bg-[#d6d6d6] flex items-center pl-[3px] shrink-0 font-bold text-[#222]">
            <svg viewBox="0 0 8 6" className="w-[7px] h-[5px] text-[#8c8c8c]"><path d="M0 0H8L4 6Z" fill="currentColor" /></svg>
            <div className="ml-[5px]"><Ic s="w-[14px] h-[14px]">{icons.schema}</Ic></div>
            <span className="ml-[4px]">Fassadenraster und Vorschau</span>
          </div>
          <div className="h-[496px] flex shrink-0">
            <Form />
            <Preview />
          </div>
          <div className="mt-[10px] h-[14px] flex items-center shrink-0">
            <div className="w-[19px]"><Ic s="w-[14px] h-[14px]">{icons.teil}</Ic></div>
            <Sel t="Teil-Muster" w="w-[118px]" />
            <div className="w-[41px] flex justify-end pr-[5px]"><Ic s="w-[13px] h-[13px]">{icons.glas}</Ic></div>
            <Sel t="Glasscheibe" w="w-[255px]" />
            <div className="w-[16px] h-[15px] ml-[14px] bg-white rounded-[3px] shadow-[0_0.5px_1px_rgba(0,0,0,0.25)] flex items-center justify-center">
              <Ic s="w-[12px] h-[12px]" c="text-[#1a6fdc]">{icons.load}</Ic>
            </div>
            <div className="ml-[6px]"><Ic s="w-[16px] h-[15px]">{icons.height}</Ic></div>
            <span className="ml-[5px]">6,000</span>
          </div>
          <div className="mt-[7px] h-[15px] rounded-[3px] bg-[#d6d6d6] flex items-center pl-[4px] shrink-0 font-bold text-[#222]">
            <svg viewBox="0 0 6 8" className="w-[5px] h-[7px] text-[#8c8c8c]"><path d="M0 0 6 4 0 8Z" fill="currentColor" /></svg>
            <div className="ml-[6px]"><Ic s="w-[13px] h-[13px]">{icons.origin}</Ic></div>
            <span className="ml-[4px]">Musterursprung</span>
          </div>
          <div className="h-px mt-[10px] bg-[#dcdcdc] shrink-0" />
          <div className="mt-[8px] h-[16px] flex items-center shrink-0">
            <div className="w-[26px] flex justify-center"><Ic s="w-[18px] h-[14px]">{icons.layersm}</Ic></div>
            <div className="w-[350px] h-[15px] bg-white rounded-[3px] shadow-[0_0.5px_1.5px_rgba(0,0,0,0.3)] flex items-center pl-[6px] pr-[2px]">
              <Eye size={11} strokeWidth={1.4} className="text-[#222]" />
              <span className="ml-[3px] flex-1">10 Fassade</span>
              <ChevronRight size={7} strokeWidth={3} className="text-[#222]" />
            </div>
            <div className="w-[64px] h-[15px] ml-[13px] bg-white rounded-[3px] shadow-[0_0.5px_1.5px_rgba(0,0,0,0.3)] flex items-center justify-center">Abbrechen</div>
            <div className="w-[64px] h-[15px] ml-[9px] bg-[#0d7bf2] rounded-[3px] flex items-center justify-center text-white font-bold">OK</div>
          </div>
        </div>
      </div>
    </div>
  );
}

export default function App() {
  return (
    <div className="relative w-[1262px] h-[730px] overflow-hidden bg-[#ededed] font-['Liberation_Sans',Arial,sans-serif] flex flex-col">
      <Toolbar />
      <InfoBox />
      <div className="flex-1 min-h-0 flex">
        <Sidebar />
        <Center />
        <RightPanel />
      </div>
      <div className="h-[13px] shrink-0 bg-[#e4e4e4] flex items-center justify-end pr-[8px] text-[10px] text-[#555]">
        <Ic s="w-[13px] h-[13px]">{icons.window}</Ic>
        <div className="w-px h-[10px] bg-[#aaa] mx-[6px]" />
        GRAPHISOFT ID
      </div>
      <Dialog />
    </div>
  );
}
